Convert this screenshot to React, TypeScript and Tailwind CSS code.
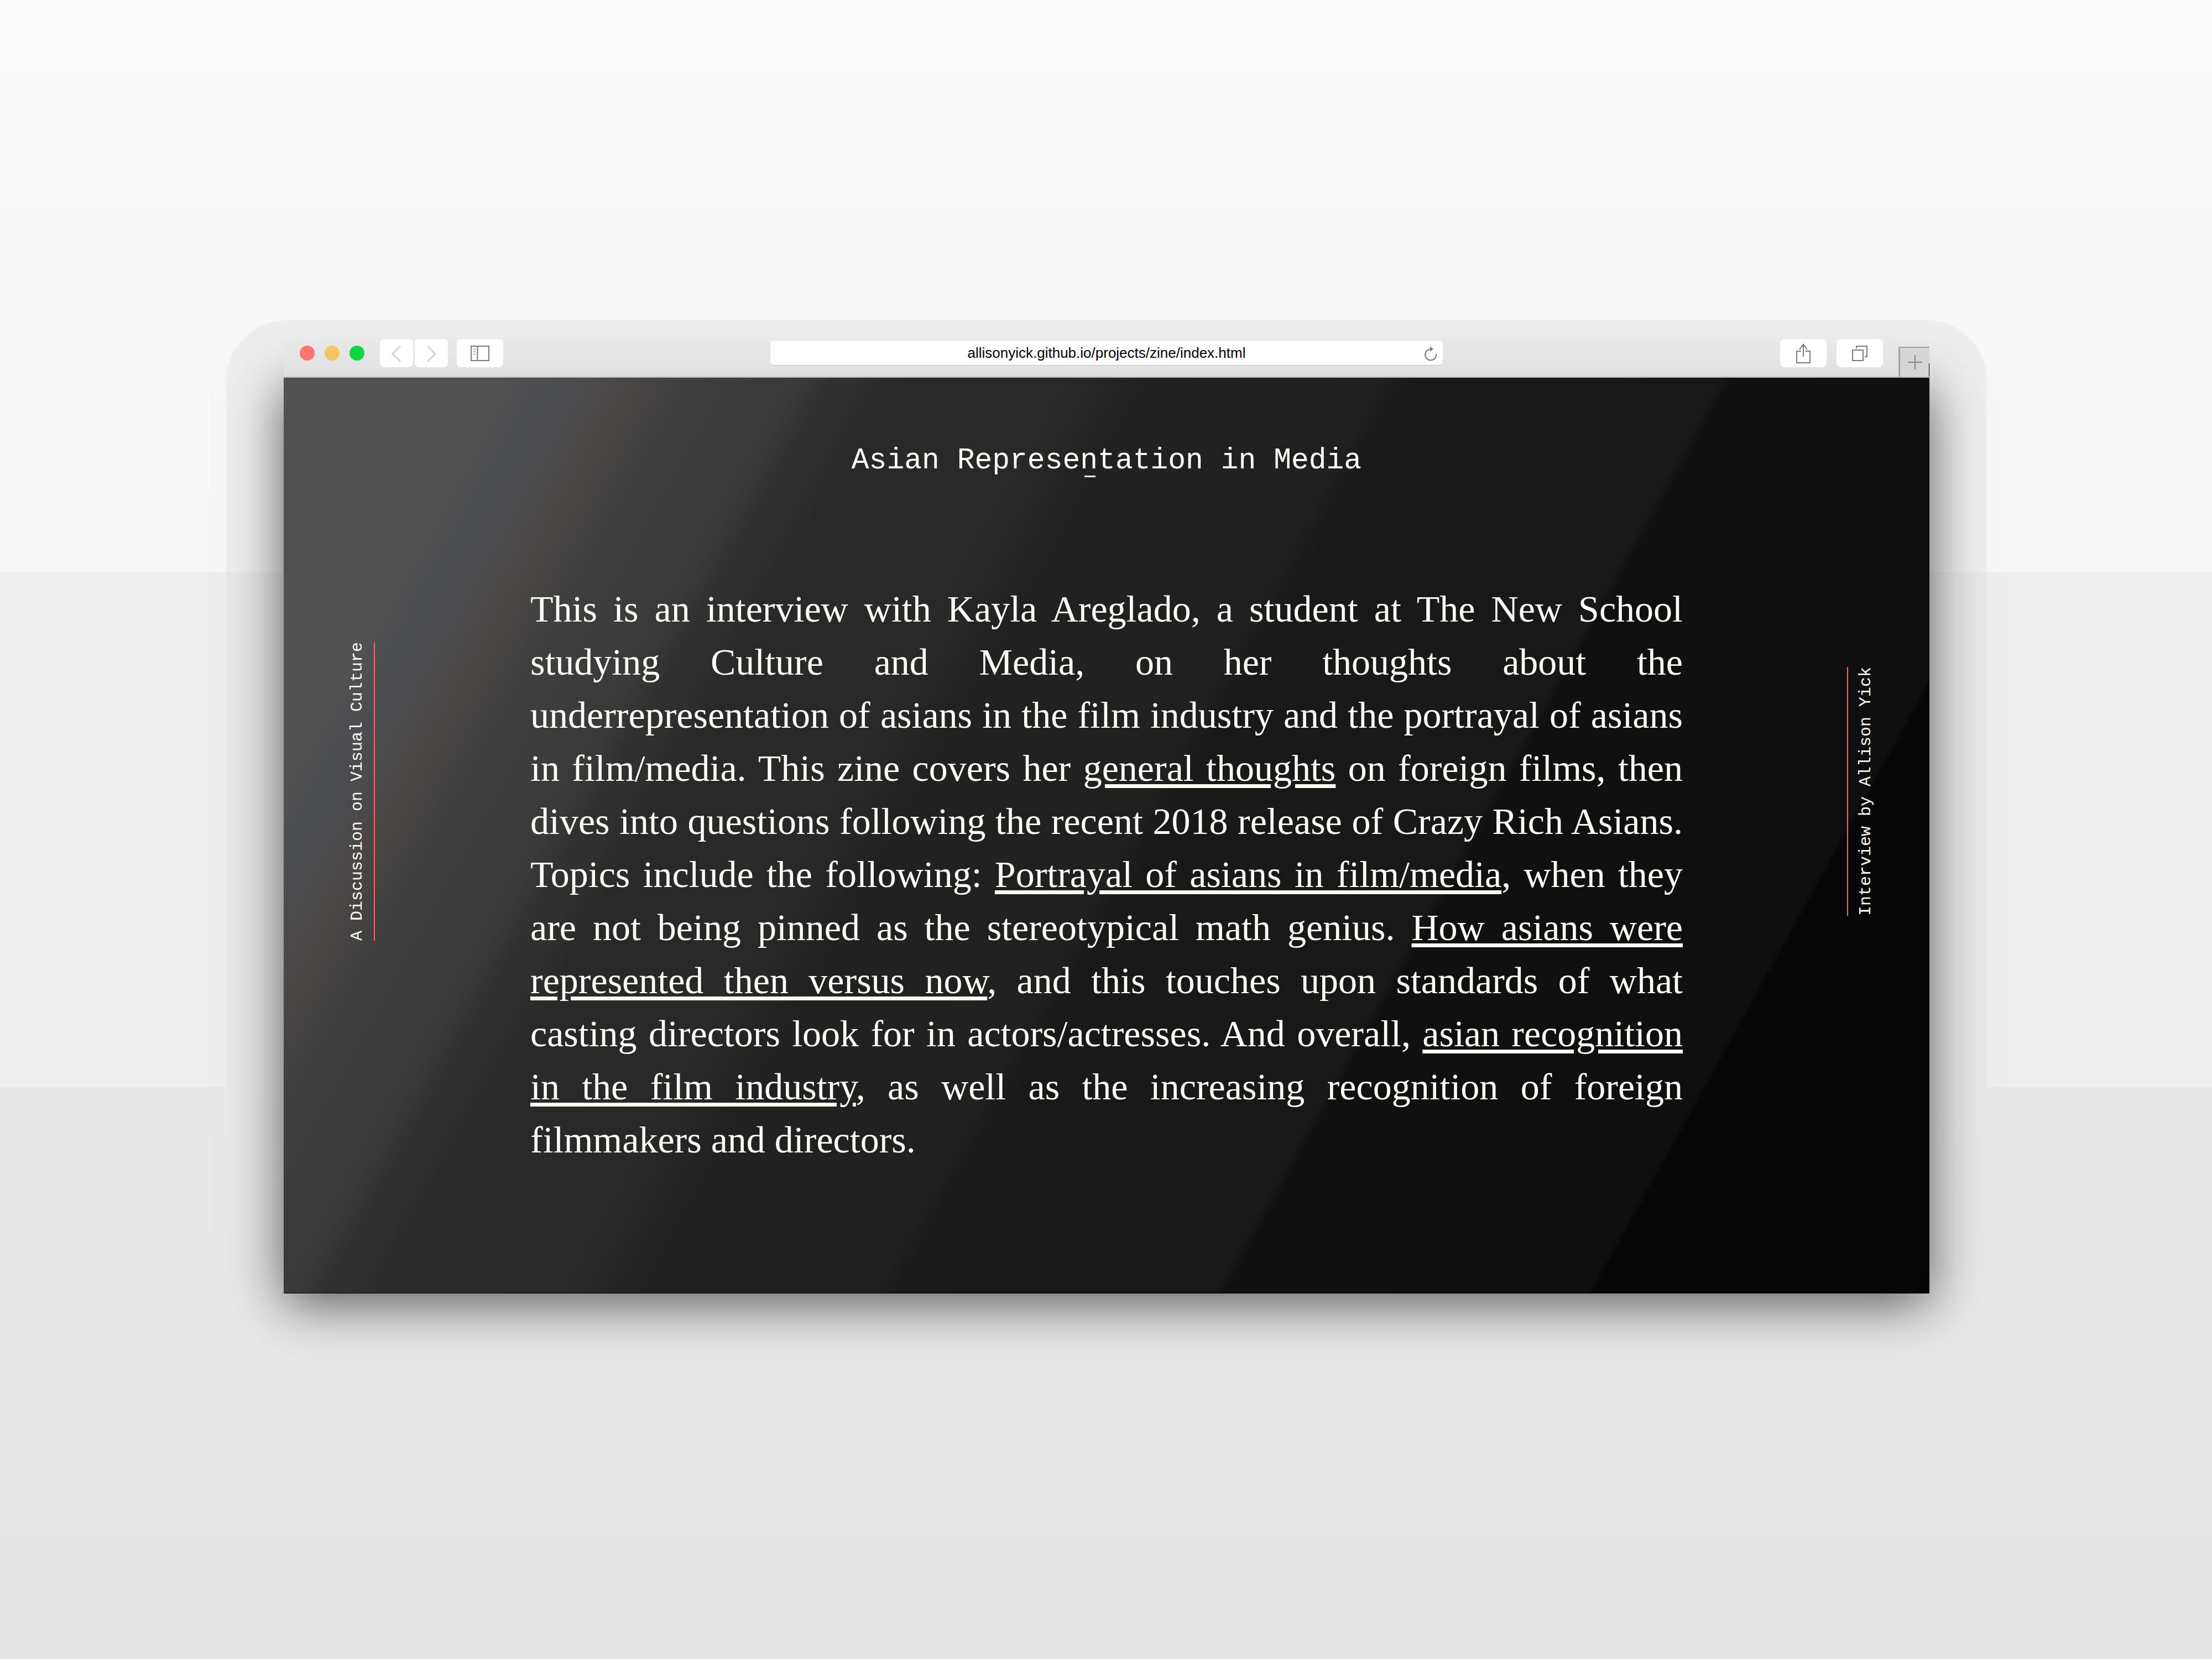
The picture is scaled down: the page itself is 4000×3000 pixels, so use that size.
import React from "react";

function ToolButton({ label, children, className }: { label: string; children: React.ReactNode; className: string }) {
  return (
    <button aria-label={label} className={`flex h-[51px] items-center justify-center rounded-[8px] bg-white ${className}`}>
      {children}
    </button>
  );
}

function Toolbar() {
  return (
    <header className="relative z-10 grid h-[75px] grid-cols-[1fr_1216px_1fr] border-b-2 border-[#bdbdbb] bg-[linear-gradient(180deg,transparent_11px,#e8e8e8_11px,#e2e2e2_60px,#dcdcdc_100%)]">
      <div className="flex items-start pl-[29px] pt-[5px]">
        <div className="flex h-[51px] items-center gap-[18px]">
          <button aria-label="Close" className="size-[27px] rounded-full bg-[#fe7470]" />
          <button aria-label="Minimise" className="size-[27px] rounded-full bg-[#f5c564]" />
          <button aria-label="Full screen" className="size-[27px] rounded-full bg-[#0ed63e]" />
        </div>
        <div className="ml-[28px] flex gap-[3px]">
          <ToolButton label="Back" className="w-[60px]">
            <svg width="20" height="32" viewBox="0 0 20 32" fill="none" stroke="#d3d3d3" strokeWidth="3">
              <path d="M17 3 3 17 17 31" />
            </svg>
          </ToolButton>
          <ToolButton label="Forward" className="w-[60px]">
            <svg width="20" height="32" viewBox="0 0 20 32" fill="none" stroke="#d3d3d3" strokeWidth="3">
              <path d="M3 3 17 17 3 31" />
            </svg>
          </ToolButton>
        </div>
        <ToolButton label="Sidebar" className="ml-4 w-[84px]">
          <svg width="34" height="28" viewBox="0 0 34 28" fill="none" stroke="#7d7b7a" strokeWidth="2">
            <path d="M1 1h32v26H1zM12.500 1v26" />
            <path d="M4.500 6.500h5M4.500 11h5M4.500 15.500h5" stroke="#a0a0a0" strokeWidth="1.500" />
          </svg>
        </ToolButton>
      </div>
      <div className="flex items-start pt-2">
        <div className="relative flex h-11 w-full items-center rounded-[6px] bg-white shadow-[0_1px_1px_#c4c4c4]">
          <input
            aria-label="Address"
            defaultValue="allisonyick.github.io/projects/zine/index.html"
            className="w-full bg-transparent text-center text-[26px] text-black outline-none"
          />
          <button aria-label="Reload" className="absolute right-[10px] top-[9px]">
            <svg width="24" height="28" viewBox="0 0 24 28" fill="none" stroke="#7b7b7b" strokeWidth="2">
              <path d="M13 6.500A10 10 0 1 0 22 15" />
              <path d="M11 1.500 17 6.500 11 10.500z" fill="#7b7b7b" stroke="none" />
            </svg>
          </button>
        </div>
      </div>
      <div className="flex items-start justify-end pt-[5px]">
        <ToolButton label="Share" className="w-[84px]">
          <svg width="26" height="36" viewBox="0 0 26 36" fill="none" stroke="#7d7b7a" strokeWidth="2">
            <path d="M9 14H1v21h24V14h-8M13 1v23M6 11l7-9 7 9" />
          </svg>
        </ToolButton>
        <ToolButton label="Tabs" className="ml-[18px] w-[84px]">
          <svg width="28" height="28" viewBox="0 0 28 28" fill="none" stroke="#7d7b7a" strokeWidth="2">
            <path d="M1 8h19v19H1zM8 5V1h19v19h-4" />
          </svg>
        </ToolButton>
        <button
          aria-label="New tab"
          className="relative ml-7 mt-[14px] flex h-[54px] w-[56px] items-center justify-center border-l-[3px] border-t-2 border-[#a3a3a3] bg-[#d5d5d5]"
        >
          <svg width="26" height="26" viewBox="0 0 26 26" stroke="#84837f" strokeWidth="2">
            <path d="M13 0v26M0 13h26" />
          </svg>
          <span className="absolute bottom-0 right-0 h-6 w-px bg-black" />
        </button>
      </div>
    </header>
  );
}

const link = "underline decoration-[7px] underline-offset-[6px]";

export default function App() {
  return (
    <main className="min-h-screen bg-[linear-gradient(180deg,#fbfbfb_0,#f7f7f7_580px,#f6f6f6_1035px,#eeeeee_1035px,#eeeeee_1966px,#e8e8e8_1966px,#e7e7e7_2440px,#e4e4e4_2800px,#e4e4e4_100%)] pl-[409px] pr-[407px] pt-[579px] font-['Liberation_Sans',Arial,sans-serif]">
      <div className="rounded-[110px] bg-[linear-gradient(180deg,#eeeeee_0,#eeeeee_456px,#e8e8e8_456px,#e8e8e8_1387px,#e7e7e7_100%)] px-[104px] pb-[100px] pt-[29px]">
        <Toolbar />
        <section className="grid min-h-[1656px] grid-cols-[446px_1fr_446px] border-b border-black bg-[linear-gradient(119deg,#525252_0%,#525252_10%,#4b4c50_13%,#4a4645_16%,#3f3f3f_19%,#393939_24%,#303030_25.500%,#303030_26.500%,#292929_28.500%,#282828_37%,#212121_40%,#202020_51%,#191919_52.500%,#181818_66.800%,#101010_67.300%,#0f0f0f_84.100%,#060606_84.400%,#050505_100%)] text-[#fffff8] shadow-[0_18px_90px_rgba(0,0,0,0.62)]">
          <aside className="flex items-start pl-[115px] pt-[478px]">
            <p className="rotate-180 border-l-2 border-[#f0685f] pl-3 font-['Liberation_Mono','Courier_New',monospace] text-[30px] leading-9 [writing-mode:vertical-rl]">
              A Discussion on Visual Culture
            </p>
          </aside>
          <div>
            <h1 className="pt-[120px] text-center font-['Liberation_Mono','Courier_New',monospace] text-[53px] leading-[60px]">
              Asian Represe
              <span className="relative">
                n<span className="absolute left-2 bottom-0 h-[3px] w-5 bg-[#fffff8]" />
              </span>
              tation in Media
            </h1>
            <p className="mt-[190px] whitespace-nowrap text-justify font-['Liberation_Serif','Times_New_Roman',serif] text-[68px] leading-[96px] [text-align-last:justify]">
              This is an interview with Kayla Areglado, a student at The New School
              <br />
              studying Culture and Media, on her thoughts about the
              <br />
              underrepresentation of asians in the film industry and the portrayal of asians
              <br />
              in film/media. This zine covers her <a href="#thoughts" className={link}>general thoughts</a> on foreign films, then
              <br />
              dives into questions following the recent 2018 release of Crazy Rich Asians.
              <br />
              Topics include the following: <a href="#portrayal" className={link}>Portrayal of asians in film/media</a>, when they
              <br />
              are not being pinned as the stereotypical math genius.{" "}
              <a href="#representation" className={link}>
                How asians were
                <br />
                represented then versus now
              </a>
              , and this touches upon standards of what
              <br />
              casting directors look for in actors/actresses. And overall,{" "}
              <a href="#recognition" className={link}>
                asian recognition
                <br />
                in the film industry
              </a>
              , as well as the increasing recognition of foreign
              <span className="block [text-align-last:left]">filmmakers and directors.</span>
            </p>
          </div>
          <aside className="flex items-start justify-end pr-[97px] pt-[523px]">
            <p className="rotate-180 border-r-2 border-[#f0685f] pr-[14px] font-['Liberation_Mono','Courier_New',monospace] text-[30px] leading-9 [writing-mode:vertical-rl]">
              Interview by Allison Yick
            </p>
          </aside>
        </section>
      </div>
    </main>
  );
}
